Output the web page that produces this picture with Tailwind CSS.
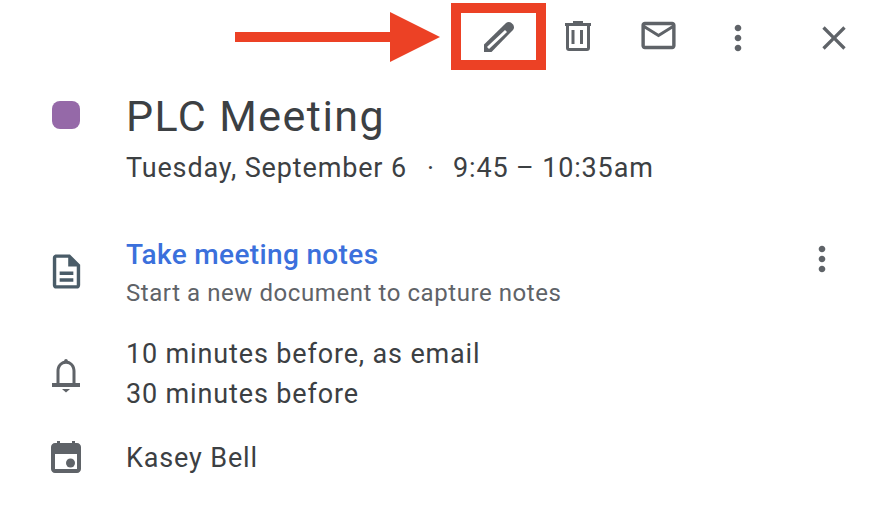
<!DOCTYPE html>
<html>
<head>
<meta charset="utf-8">
<script src="https://cdn.jsdelivr.net/npm/@tailwindcss/browser@4"></script>
</head>
<body class="bg-white">
<div class="w-[882px] h-[516px] overflow-hidden bg-white font-['Roboto',sans-serif] text-[#3c4043]">
  <header class="h-[73px] pt-[3px] pl-[235px] flex items-start">
    <svg width="206" height="50" viewBox="0 0 206 50" class="mt-[9px] shrink-0"><rect x="0" y="20" width="156" height="10" fill="#ec4125"/><path d="M155 0L205 25L155 50Z" fill="#ec4125"/></svg>
    <div class="ml-[10px] w-[95px] h-[67px] border-[10px] border-[#ec4125] flex items-center justify-center shrink-0">
      <svg width="30" height="30" viewBox="0 0 30 30" fill="#5f6368"><path d="M0 30V22.500L22 1C23.500-.3 26-.3 27.500 1L29 2.500C30.300 4 30.300 6.500 29 8L7.500 30Z"/><path d="M4 26L22 9" stroke="#fff" stroke-width="3"/></svg>
    </div>
    <svg width="26" height="30" viewBox="0 0 26 30" class="ml-[19px] mt-[18px] shrink-0" fill="#5f6368"><path d="M8 0h10v2h8v3H0V2h8z"/><path d="M1 5h24v22c0 1.800-1.200 3-3 3H4c-1.800 0-3-1.200-3-3zm3 0v22h18V5z" fill-rule="evenodd"/><rect x="6.500" y="9" width="3" height="14"/><rect x="15" y="9" width="3" height="14"/></svg>
    <svg width="41" height="41" viewBox="0 0 24 24" class="ml-[47px] mt-[12px] shrink-0" fill="#5f6368"><path d="M20 4H4c-1.100 0-2 .9-2 2v12c0 1.100.9 2 2 2h16c1.100 0 2-.9 2-2V6c0-1.100-.9-2-2-2zm0 14H4V8l8 5 8-5v10zm-8-7L4 6h16l-8 5z"/></svg>
    <svg width="40" height="40" viewBox="0 0 24 24" class="ml-[39px] mt-[15px] shrink-0" fill="#5f6368"><path d="M12 8c1.100 0 2-.9 2-2s-.9-2-2-2-2 .9-2 2 .9 2 2 2zm0 2c-1.100 0-2 .9-2 2s.9 2 2 2 2-.9 2-2-.9-2-2-2zm0 6c-1.100 0-2 .9-2 2s.9 2 2 2 2-.9 2-2-.9-2-2-2z"/></svg>
    <svg width="40" height="40" viewBox="0 0 24 24" class="ml-[56px] mt-[15px] shrink-0" fill="#5f6368"><path d="M19 6.410L17.590 5 12 10.590 6.410 5 5 6.410 10.590 12 5 17.590 6.410 19 12 13.410 17.590 19 19 17.590 13.410 12z"/></svg>
  </header>

  <section class="flex items-start">
    <div class="w-[126px] shrink-0 pl-[52px] pt-[28px]"><div class="w-[28px] h-[28px] rounded-[8px] bg-[#9569a8]"></div></div>
    <div>
      <h1 class="text-[43px] leading-[48px] mt-[19px] font-normal tracking-[1.45px]">PLC Meeting</h1>
      <p class="text-[27px] leading-[34px] mt-[11px] tracking-[0.85px] whitespace-pre">Tuesday, September 6  <span class="ml-[5px] mr-[3px]">·</span>  9:45 – 10:35am</p>
    </div>
  </section>

  <section class="flex items-start mt-[53px]">
    <div class="w-[126px] shrink-0 pl-[46px] pt-[13px]">
      <svg width="41" height="41" viewBox="0 0 24 24" fill="#4a5c68"><path d="M8 16h8v2H8zm0-4h8v2H8zm6-10H6c-1.100 0-2 .9-2 2v16c0 1.100.89 2 1.990 2H18c1.100 0 2-.9 2-2V8l-6-6zm4 18H6V4h7v5h5v11z"/></svg>
    </div>
    <div class="grow">
      <p class="text-[28px] leading-[34px] font-medium text-[#3b70dc] tracking-[0.35px]">Take meeting notes</p>
      <p class="text-[24px] leading-[30px] mt-[6px] tracking-[0.57px] text-[#5f6368]">Start a new document to capture notes</p>
    </div>
    <svg width="40" height="40" viewBox="0 0 24 24" class="mr-[40px] mt-[1px] shrink-0" fill="#5f6368"><path d="M12 8c1.100 0 2-.9 2-2s-.9-2-2-2-2 .9-2 2 .9 2 2 2zm0 2c-1.100 0-2 .9-2 2s.9 2 2 2 2-.9 2-2-.9-2-2-2zm0 6c-1.100 0-2 .9-2 2s.9 2 2 2 2-.9 2-2-.9-2-2-2z"/></svg>
  </section>

  <section class="flex items-start mt-[27px]">
    <div class="w-[126px] shrink-0 pl-[52px] pt-[24px]">
      <svg width="28" height="34" viewBox="0 0 28 34" fill="#5f6368"><path d="M14 0c1 0 1.800.7 1.800 1.800C20.500 3 23.500 7 23.500 12V24H4.500V12C4.500 7 7.500 3 12.200 1.800 12.200.7 13 0 14 0zm0 4.800C10 4.800 7.500 8 7.500 12V24h13V12C20.500 8 18 4.800 14 4.800z" fill-rule="evenodd"/><rect x="0" y="24" width="28" height="4"/><path d="M10 30h8l-4 3.500z"/></svg>
    </div>
    <div class="text-[27px] leading-[39px] tracking-[0.85px]">
      <p>10 minutes before, as email</p>
      <p class="mt-[1px]">30 minutes before</p>
    </div>
  </section>

  <section class="flex items-start mt-[25px]">
    <div class="w-[126px] shrink-0 pl-[51px] pt-[2px]">
      <svg width="30" height="32" viewBox="0 0 30 32" fill="#5f6368"><path d="M6 0h3v2h12V0h3v2h2c2.200 0 4 1.800 4 4v22c0 2.200-1.800 4-4 4H4c-2.200 0-4-1.800-4-4V6c0-2.200 1.800-4 4-4h2zM4 13v15h22V13z" fill-rule="evenodd"/><circle cx="19.500" cy="22" r="4.500"/></svg>
    </div>
    <p class="text-[27px] leading-[39px] tracking-[0.85px]">Kasey Bell</p>
  </section>
</div>
</body>
</html>
